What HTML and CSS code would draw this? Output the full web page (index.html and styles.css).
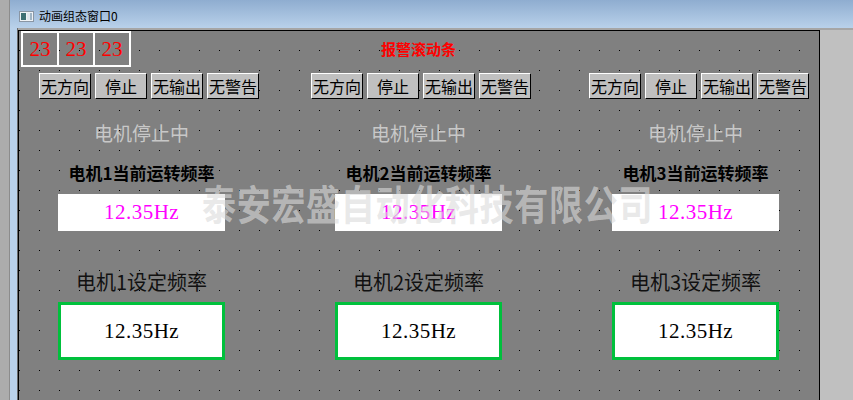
FILE: index.html
```html
<!DOCTYPE html>
<html lang="zh-CN">
<head>
<meta charset="utf-8">
<title>动画组态窗口0</title>
<link rel="stylesheet" href="styles.css">
</head>
<body>
<div class="screen">
  <div class="side"></div>
  <div class="win">
    <div class="titlebar">
      <svg class="ticon" width="15" height="11" viewBox="0 0 15 11">
        <rect x="0.5" y="0.5" width="14" height="10" fill="#eef2f6" stroke="#8a96a4"/>
        <rect x="2" y="2" width="5" height="7" fill="#3d6f73"/>
        <rect x="8" y="2" width="5" height="7" fill="#dfe7ee"/>
        <rect x="11" y="2" width="2" height="7" fill="#9fb4c4"/>
      </svg>
      <span class="ttext">动画组态窗口0</span>
    </div>
    <div class="body">
      <div class="frame-left"></div>
      <div class="inner">
        <div class="canvas">
          <div class="toprow">
            <div class="counters">
              <div class="cnt">23</div>
              <div class="cnt">23</div>
              <div class="cnt">23</div>
            </div>
            <div class="alarm">报警滚动条</div>
          </div>
          <div class="btnrow">
            <div class="grp">
              <div class="btn">无方向</div><div class="btn">停止</div><div class="btn">无输出</div><div class="btn">无警告</div>
            </div>
            <div class="grp g2">
              <div class="btn">无方向</div><div class="btn">停止</div><div class="btn">无输出</div><div class="btn">无警告</div>
            </div>
            <div class="grp g3">
              <div class="btn">无方向</div><div class="btn">停止</div><div class="btn">无输出</div><div class="btn">无警告</div>
            </div>
          </div>
          <div class="cols">
            <div class="col">
              <div class="status">电机停止中</div>
              <div class="curlabel">电机1当前运转频率</div>
              <div class="curbox">12.35Hz</div>
              <div class="setlabel">电机1设定频率</div>
              <div class="setbox">12.35Hz</div>
            </div>
            <div class="col">
              <div class="status">电机停止中</div>
              <div class="curlabel">电机2当前运转频率</div>
              <div class="curbox">12.35Hz</div>
              <div class="setlabel">电机2设定频率</div>
              <div class="setbox">12.35Hz</div>
            </div>
            <div class="col">
              <div class="status">电机停止中</div>
              <div class="curlabel">电机3当前运转频率</div>
              <div class="curbox">12.35Hz</div>
              <div class="setlabel">电机3设定频率</div>
              <div class="setbox">12.35Hz</div>
            </div>
          </div>
          <div class="watermark">泰安宏盛自动化科技有限公司</div>
        </div>
        <div class="rest"></div>
      </div>
    </div>
  </div>
</div>
</body>
</html>
```
FILE: styles.css
```css
* { box-sizing: border-box; }
html, body { margin: 0; padding: 0; }
body {
  width: 853px;
  height: 400px;
  overflow: hidden;
  background: #c0c0c0;
  font-family: "Noto Sans CJK SC", sans-serif;
}
.screen { display: flex; height: 400px; }
.side {
  width: 10px;
  flex: none;
  background: #acacac;
  border-right: 1px solid #8c8c8c;
}
.win { flex: 1; display: flex; flex-direction: column; min-width: 0; }
.titlebar {
  height: 28px;
  flex: none;
  padding: 4px 0 0 9px;
  display: flex;
  align-items: center;
  background: linear-gradient(#8fadd0, #b9d1ea);
}
.ticon { display: block; margin-right: 5px; }
.ttext { font-size: 12px; line-height: 1; color: #000; }
.body { flex: 1; display: flex; min-height: 0; }
.frame-left {
  width: 8px;
  flex: none;
  background: #b9d1ea;
  border-right: 1px solid #6a6a6a;
}
.inner { flex: 1; display: flex; border-top: 2px solid #a6a6a6; }
.canvas {
  width: 802px;
  flex: none;
  position: relative;
  border: 1px solid #000;
  border-bottom: none;
  background-color: #808080;
  background-image: conic-gradient(at 1px 1px, transparent 0 270deg, #000 270deg 360deg);
  background-size: 20px 20px;
  background-position: 0 19px;
}
.rest { flex: 1; background: #c0c0c0; }

.toprow { display: flex; align-items: center; height: 36px; padding-left: 2px; }
.counters { display: flex; }
.cnt {
  width: 38px;
  height: 36px;
  border: 2px solid #fff;
  color: #f00;
  font: 21px/32px "Liberation Serif", serif;
  text-align: center;
}
.cnt + .cnt { margin-left: -2px; }
.alarm {
  margin-left: 250px;
  color: #f00;
  font-weight: 700;
  font-size: 15px;
  line-height: 20px;
}

.btnrow { display: flex; margin-top: 6px; padding-left: 20px; }
.grp { display: flex; gap: 4px; }
.g2 { margin-left: 52px; }
.g3 { margin-left: 58px; }
.btn {
  width: 52px;
  height: 26px;
  background: #c0c0c0;
  border: 1px solid;
  border-color: #fff #000 #000 #fff;
  font-size: 16px;
  line-height: 24px;
  text-align: center;
  color: #000;
}

.cols {
  display: grid;
  grid-template-columns: repeat(3, 167px);
  column-gap: 110px;
  padding-left: 39px;
}
.col { display: flex; flex-direction: column; align-items: center; }
.status { margin-top: 24px; font-size: 19px; line-height: 20px; color: #c8c8c8; }
.curlabel { margin-top: 20px; font-size: 17px; line-height: 20px; font-weight: 700; color: #000; white-space: nowrap; }
.curbox {
  margin-top: 11px;
  width: 167px;
  height: 37px;
  background: #fff;
  color: #f0f;
  font: 21px/37px "Liberation Serif", serif;
  letter-spacing: 0.5px;
  text-align: center;
}
.setlabel { margin-top: 39px; font-size: 20px; line-height: 24px; color: #111; white-space: nowrap; }
.setbox {
  margin-top: 8px;
  width: 167px;
  height: 58px;
  border: 3px solid #00c03c;
  background: #fff;
  color: #000;
  font: 21px/52px "Liberation Serif", serif;
  letter-spacing: 0.5px;
  text-align: center;
}

.watermark {
  position: absolute;
  left: 183px;
  top: 155px;
  font-size: 34px;
  line-height: 34px;
  font-weight: 700;
  letter-spacing: 0.7px;
  color: rgba(218, 218, 218, 0.62);
  white-space: nowrap;
  transform: scaleY(1.2);
  pointer-events: none;
}
```
